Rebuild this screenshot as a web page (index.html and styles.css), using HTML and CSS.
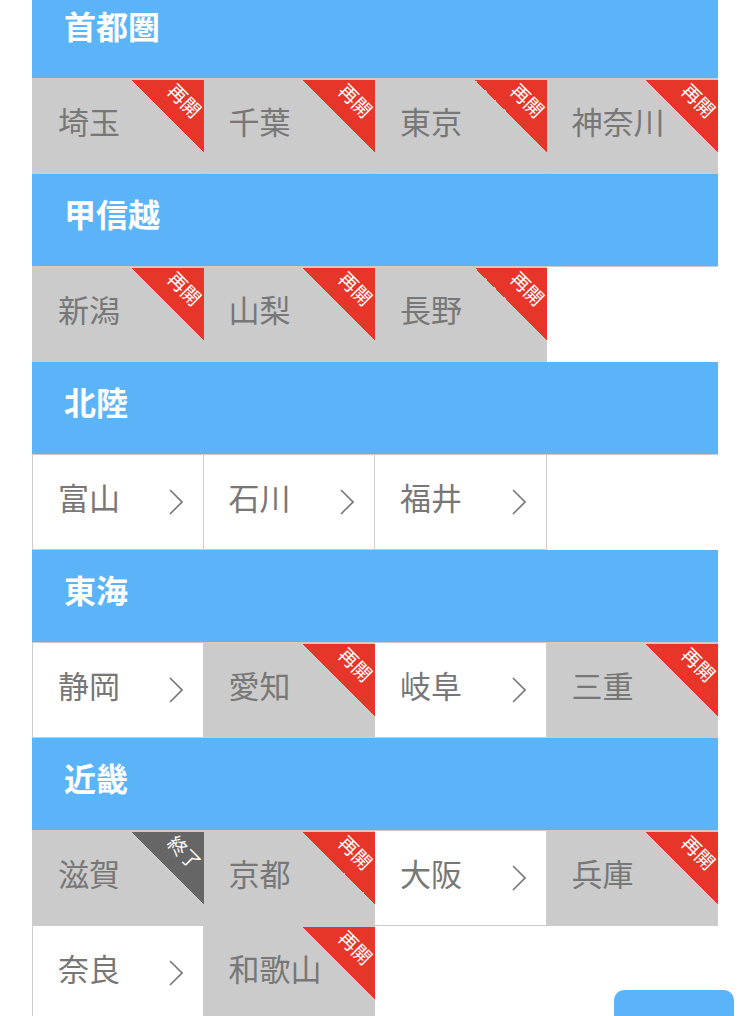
FILE: index.html
```html
<!DOCTYPE html>
<html lang="ja">
<head>
  <meta charset="UTF-8">
  <meta name="viewport" content="width=device-width, initial-scale=1.0">
  <title>エリア選択</title>
  <link rel="stylesheet" href="styles.css">
</head>
<body>
  <div class="areas">
    <h2 class="area-title">首都圏</h2>
    <div class="cells">
      <a class="cell closed">埼玉<span class="ribbon"><span>再開</span></span></a>
      <a class="cell closed">千葉<span class="ribbon"><span>再開</span></span></a>
      <a class="cell closed">東京<span class="ribbon"><span>再開</span></span></a>
      <a class="cell closed">神奈川<span class="ribbon"><span>再開</span></span></a>
    </div>

    <h2 class="area-title">甲信越</h2>
    <div class="cells">
      <a class="cell closed">新潟<span class="ribbon"><span>再開</span></span></a>
      <a class="cell closed">山梨<span class="ribbon"><span>再開</span></span></a>
      <a class="cell closed">長野<span class="ribbon"><span>再開</span></span></a>
    </div>

    <h2 class="area-title">北陸</h2>
    <div class="cells">
      <a class="cell">富山<svg class="chevron" viewBox="0 0 14 26"><polyline points="1,1 13,13 1,25"/></svg></a>
      <a class="cell">石川<svg class="chevron" viewBox="0 0 14 26"><polyline points="1,1 13,13 1,25"/></svg></a>
      <a class="cell">福井<svg class="chevron" viewBox="0 0 14 26"><polyline points="1,1 13,13 1,25"/></svg></a>
    </div>

    <h2 class="area-title">東海</h2>
    <div class="cells">
      <a class="cell">静岡<svg class="chevron" viewBox="0 0 14 26"><polyline points="1,1 13,13 1,25"/></svg></a>
      <a class="cell closed">愛知<span class="ribbon"><span>再開</span></span></a>
      <a class="cell">岐阜<svg class="chevron" viewBox="0 0 14 26"><polyline points="1,1 13,13 1,25"/></svg></a>
      <a class="cell closed">三重<span class="ribbon"><span>再開</span></span></a>
    </div>

    <h2 class="area-title">近畿</h2>
    <div class="cells">
      <a class="cell closed">滋賀<span class="ribbon ended"><span>終了</span></span></a>
      <a class="cell closed">京都<span class="ribbon"><span>再開</span></span></a>
      <a class="cell">大阪<svg class="chevron" viewBox="0 0 14 26"><polyline points="1,1 13,13 1,25"/></svg></a>
      <a class="cell closed">兵庫<span class="ribbon"><span>再開</span></span></a>
      <a class="cell">奈良<svg class="chevron" viewBox="0 0 14 26"><polyline points="1,1 13,13 1,25"/></svg></a>
      <a class="cell closed">和歌山<span class="ribbon"><span>再開</span></span></a>
    </div>
  </div>

  <div class="float-button"></div>
</body>
</html>
```

FILE: styles.css
```css
body {
  margin: 0;
  background: #fff;
  font-family: "Noto Sans CJK JP", "Noto Sans", sans-serif;
}

.areas {
  margin: -14px 32px 0;
}

.area-title {
  margin: 0;
  height: 92px;
  padding: 0 0 14px 32px;
  box-sizing: border-box;
  display: flex;
  align-items: center;
  background: #5bb3f8;
  color: #fff;
  font-size: 32px;
  font-weight: bold;
}

.cells {
  display: grid;
  grid-template-columns: repeat(4, 1fr);
  border-top: 1px solid #ccc;
}

.cell {
  position: relative;
  height: 95px;
  box-sizing: border-box;
  display: flex;
  align-items: center;
  justify-content: space-between;
  padding: 0 20px 12px 25px;
  border-right: 1px solid #ccc;
  border-bottom: 1px solid #ccc;
  background: #fff;
  color: #777;
  font-size: 31px;
  text-decoration: none;
}

.cell:nth-child(4n+1) {
  border-left: 1px solid #ccc;
}

.cell.closed {
  background: #cbcbcb;
}

.chevron {
  width: 14px;
  height: 26px;
  margin-top: 12px;
  fill: none;
  stroke: #777;
  stroke-width: 1.6;
}

.ribbon {
  position: absolute;
  top: 1px;
  right: -1px;
  width: 72px;
  height: 72px;
  background: linear-gradient(to bottom left, #e8352a 50%, transparent 50%);
}

.ribbon.ended {
  background: linear-gradient(to bottom left, #666 50%, transparent 50%);
}

.ribbon span {
  position: absolute;
  left: 33px;
  top: 10px;
  width: 40px;
  line-height: 20px;
  text-align: center;
  color: #fff;
  font-size: 19px;
  white-space: nowrap;
  transform: rotate(45deg);
}

.float-button {
  position: fixed;
  right: 16px;
  top: 990px;
  width: 120px;
  height: 60px;
  border-radius: 10px;
  background: #5bb3f8;
}
```
